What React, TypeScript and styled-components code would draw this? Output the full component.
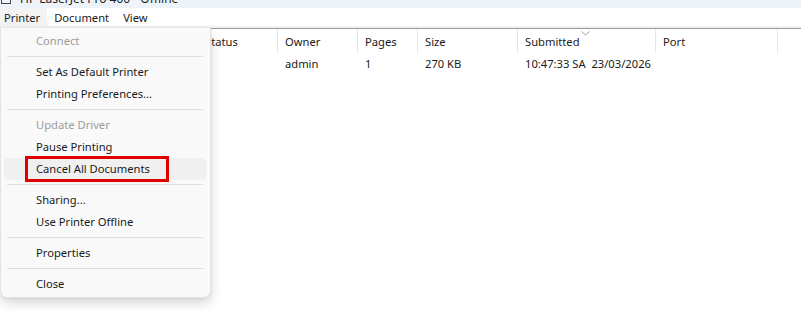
import styled, { createGlobalStyle } from 'styled-components';

const GlobalStyle = createGlobalStyle`
  html, body {
    margin: 0;
    padding: 0;
    background: #ffffff;
  }
  body {
    font-family: "Noto Sans", "Open Sans", sans-serif;
    font-size: 11.2px;
    color: #1a1a1a;
  }
`;

type Col = { title: string; width: number };

const columns: Col[] = [
  { title: 'Document Name', width: 198 },
  { title: 'Status', width: 80 },
  { title: 'Owner', width: 80 },
  { title: 'Pages', width: 60 },
  { title: 'Size', width: 100 },
  { title: 'Submitted', width: 138 },
  { title: 'Port', width: 122 },
];

const rows = [
  ['Microsoft Word - Report.docx', '', 'admin', '1', '270 KB', '10:47:33 SA  23/03/2026', ''],
];

type MenuEntry =
  | { kind: 'sep' }
  | { kind: 'item'; label: string; disabled?: boolean; hot?: boolean };

const menu: MenuEntry[] = [
  { kind: 'item', label: 'Connect', disabled: true },
  { kind: 'sep' },
  { kind: 'item', label: 'Set As Default Printer' },
  { kind: 'item', label: 'Printing Preferences...' },
  { kind: 'sep' },
  { kind: 'item', label: 'Update Driver', disabled: true },
  { kind: 'item', label: 'Pause Printing' },
  { kind: 'item', label: 'Cancel All Documents', hot: true },
  { kind: 'sep' },
  { kind: 'item', label: 'Sharing...' },
  { kind: 'item', label: 'Use Printer Offline' },
  { kind: 'sep' },
  { kind: 'item', label: 'Properties' },
  { kind: 'sep' },
  { kind: 'item', label: 'Close' },
];

const Window = styled.div`
  position: relative;
  width: 801px;
  height: 311px;
  overflow: hidden;
  background: #ffffff;
`;

const TitleBar = styled.div`
  height: 8px;
  background: #eef3fa;
  overflow: hidden;
  display: flex;
  align-items: flex-start;
  gap: 9px;
  padding-left: 1px;
`;

const TitleIcon = styled.span`
  width: 8px;
  height: 8px;
  border: 1px solid #444;
  margin-top: -6px;
  flex-shrink: 0;
`;

const TitleText = styled.span`
  font-size: 12px;
  line-height: 12px;
  margin-top: -7px;
  color: #222;
  white-space: nowrap;
`;

const MenuBar = styled.div`
  height: 18px;
  display: flex;
  align-items: center;
  border-bottom: 2px solid #f0f0f0;
`;

const MenuBarItem = styled.div<{ $open?: boolean }>`
  height: 100%;
  display: flex;
  align-items: center;
  padding: 0 7px;
  background: ${(p) => (p.$open ? '#f3f3f3' : 'transparent')};
  &:first-child {
    padding-left: 4px;
  }
`;

const Table = styled.div`
  border-top: 1px solid #9a9a9a;
`;

const HeaderRow = styled.div`
  display: flex;
  height: 24px;
`;

const HeaderCell = styled.div<{ $w: number }>`
  position: relative;
  width: ${(p) => p.$w}px;
  flex-shrink: 0;
  display: flex;
  align-items: center;
  padding: 1px 0 0 7px;
  box-sizing: border-box;
  border-right: 1px solid #e5e5e5;
  white-space: nowrap;
`;

const SortArrow = styled.svg`
  position: absolute;
  top: 2px;
  left: 63px;
`;

const Row = styled.div`
  display: flex;
  height: 21px;
`;

const Cell = styled.div<{ $w: number }>`
  width: ${(p) => p.$w}px;
  flex-shrink: 0;
  display: flex;
  align-items: center;
  padding-left: 7px;
  box-sizing: border-box;
  white-space: pre;
  overflow: hidden;
`;

const Dropdown = styled.div`
  position: absolute;
  left: 0;
  top: 28px;
  width: 211px;
  box-sizing: border-box;
  padding: 2px 0;
  background: #f9f9f9;
  border: 1px solid #e3e3e3;
  border-top: none;
  border-radius: 0 0 7px 7px;
  box-shadow: 0 5px 12px rgba(0, 0, 0, 0.16), 0 1px 3px rgba(0, 0, 0, 0.06);
`;

const Item = styled.div<{ $disabled?: boolean; $hot?: boolean }>`
  position: relative;
  height: 22px;
  box-sizing: border-box;
  margin: 0 4px 0 3px;
  padding: 0 0 2px 32px;
  display: flex;
  align-items: center;
  border-radius: 4px;
  color: ${(p) => (p.$disabled ? '#9b9b9b' : '#1a1a1a')};
  background: ${(p) => (p.$hot ? '#f0f0f0' : 'transparent')};
`;

const Highlight = styled.span`
  position: absolute;
  left: 21px;
  top: -2px;
  width: 144px;
  height: 26px;
  box-sizing: border-box;
  border: 3px solid #e00000;
`;

const Separator = styled.div`
  height: 9px;
  display: flex;
  align-items: center;
  padding: 0 7px 0 6px;
  &::after {
    content: '';
    flex: 1;
    height: 1px;
    background: #e0e0e0;
  }
`;

export default function App() {
  return (
    <Window>
      <GlobalStyle />
      <TitleBar>
        <TitleIcon />
        <TitleText>HP LaserJet Pro 400 - Offline</TitleText>
      </TitleBar>
      <MenuBar>
        <MenuBarItem $open>Printer</MenuBarItem>
        <MenuBarItem>Document</MenuBarItem>
        <MenuBarItem>View</MenuBarItem>
      </MenuBar>
      <Table>
        <HeaderRow>
          {columns.map((c) => (
            <HeaderCell key={c.title} $w={c.width}>
              {c.title}
              {c.title === 'Submitted' && (
                <SortArrow width="9" height="5" viewBox="0 0 9 5">
                  <path d="M0.5 0.5 L4.5 4 L8.5 0.5" fill="none" stroke="#a0a0a0" strokeWidth="1" />
                </SortArrow>
              )}
            </HeaderCell>
          ))}
        </HeaderRow>
        {rows.map((r, i) => (
          <Row key={i}>
            {r.map((v, j) => (
              <Cell key={j} $w={columns[j].width}>
                {v}
              </Cell>
            ))}
          </Row>
        ))}
      </Table>
      <Dropdown>
        {menu.map((m, i) =>
          m.kind === 'sep' ? (
            <Separator key={i} />
          ) : (
            <Item key={i} $disabled={m.disabled} $hot={m.hot}>
              {m.label}
              {m.hot && <Highlight />}
            </Item>
          ),
        )}
      </Dropdown>
    </Window>
  );
}
